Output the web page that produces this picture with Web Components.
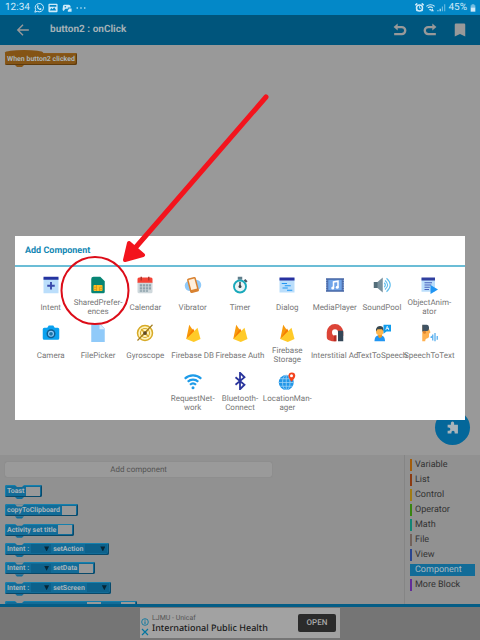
<!DOCTYPE html>
<html lang="en">
<head>
<meta charset="utf-8">
<meta name="viewport" content="width=device-width, initial-scale=1">
<title>button2 : onClick</title>
<style>
html, body { margin: 0; height: 100%; }
body { font-family: Roboto, "Noto Sans", sans-serif; text-rendering: geometricPrecision; overflow: hidden; }
</style>
</head>
<body>
<editor-app></editor-app>

<script>
/* Icon bodies, all on a 24x24 grid. */
const ICONS = {
  back: '<path d="M22 12H4M12 3l-9 9 9 9" fill="none" stroke="currentColor" stroke-width="2.4"/>',
  undo: '<path d="M2 19h13a6 6 0 0 0 0-12H6" fill="none" stroke="currentColor" stroke-width="4"/><path d="M1 7l7-6v12z" fill="currentColor"/>',
  redo: '<path d="M22 19H9A6 6 0 0 1 9 7h9" fill="none" stroke="currentColor" stroke-width="4"/><path d="M23 7l-7-6v12z" fill="currentColor"/>',
  bookmark: '<path d="M5 1h14a2 2 0 0 1 2 2v20l-9-4-9 4V3a2 2 0 0 1 2-2z" fill="currentColor"/>',
  whatsapp: '<path d="M2 22l2-6a10 10 0 1 1 4 4z" fill="none" stroke="currentColor" stroke-width="2.4"/><path d="M8 6c-3 4 3 12 9 11l1-3-3-2-2 2-3-4 1-2-1-3z" fill="currentColor"/>',
  picture: '<path fill-rule="evenodd" d="M3 2h18a2 2 0 0 1 2 2v16a2 2 0 0 1-2 2H3a2 2 0 0 1-2-2V4a2 2 0 0 1 2-2zM4 18h16l-5-8-4 5-3-3zM4 5v4h16V5z" fill="currentColor"/>',
  game: '<path d="M5 4h11c3 0 5 3 5 7h-7v3H8l-4 5c-3 0-3-4-2-8 0-4 1-7 3-7z" fill="currentColor"/><path d="M16 13h7v8h-9v-5h2z" fill="currentColor"/><circle cx="8" cy="9" r="2" fill="#0388c8"/>',
  dots: '<g fill="currentColor"><circle cx="3" cy="12" r="2"/><circle cx="12" cy="12" r="2"/><circle cx="21" cy="12" r="2"/></g>',
  alarm: '<path d="M1 6l5-5M23 6l-5-5M4 21l3-3M20 21l-3-3" stroke="currentColor" stroke-width="4"/><circle cx="12" cy="13" r="8" fill="none" stroke="currentColor" stroke-width="4"/><path d="M12 8v6h4" fill="none" stroke="currentColor" stroke-width="2"/>',
  wifi: '<g fill="none" stroke="currentColor" stroke-width="3"><path d="M1 9a16 16 0 0 1 22 0M5 13a10 10 0 0 1 13 0"/></g><path d="M8 16h7l-4 5zM17 14l4 8h-8z" fill="currentColor"/>',
  signal: '<path d="M1 19h3v3H1zM7 15h3v7H7z" fill="currentColor"/><path d="M13 9h3v13h-3zM19 3h3v19h-3z" fill="currentColor" opacity=".5"/>',
  battery: '<path d="M8 1h8v3h3v8H5V4h3z" fill="currentColor" opacity=".55"/><path d="M5 11h14v12H5z" fill="currentColor"/>',
  puzzle: '<path d="M3 7h6V4a3 3 0 0 1 6 0v3h7v16h-6v-2a3 3 0 0 0-6 0v2H3v-5h2a3 3 0 0 0 0-6H3z" fill="currentColor"/>',
  info: '<circle cx="12" cy="12" r="10" fill="none" stroke="currentColor" stroke-width="2.5"/><path d="M12 10v8M12 5v3" stroke="currentColor" stroke-width="3"/>',
  close: '<path d="M3 3l18 18M21 3L3 21" stroke="currentColor" stroke-width="3.5"/>',

  intent: '<path d="M2 3h20v20H2z" fill="#bbdefb"/><path d="M2 1h20v4H2z" fill="#2433a0"/><path d="M12 8v10M7 13h10" stroke="#3949ab" stroke-width="2.5"/>',
  prefs: '<path d="M6 1h9l6 6v14a2 2 0 0 1-2 2H5a2 2 0 0 1-2-2V4a3 3 0 0 1 3-3z" fill="#078574"/><rect x="6" y="12" width="12" height="8" rx="1" fill="#ffbe22"/><path d="M6 15h4M6 18h4M14 15h4M14 18h4M10 12v8M14 15v5" stroke="#d6931d"/>',
  calendar: '<path d="M2 8h20v13a2 2 0 0 1-2 2H4a2 2 0 0 1-2-2z" fill="#cfd8dc"/><path d="M4 2h16a2 2 0 0 1 2 2v5H2V4a2 2 0 0 1 2-2z" fill="#f44336"/><path d="M7 1v5M17 1v5" stroke="#b4342b" stroke-width="2"/><g fill="#8fa2ac"><path d="M5 11h3v3H5zM9 11h3v3H9zM13 11h3v3h-3zM17 11h3v3h-3zM5 15h3v3H5zM9 15h3v3H9zM13 15h3v3h-3zM17 15h3v3h-3zM5 19h3v2H5zM9 19h3v2H9zM13 19h3v2h-3z"/></g>',
  vibrator: '<circle cx="8" cy="13" r="7" fill="#90caf9"/><circle cx="16" cy="12" r="7" fill="#90caf9"/><g transform="rotate(-15 12 12)"><rect x="6" y="2" width="12" height="20" rx="2" fill="#d98231"/><rect x="8" y="4" width="8" height="14" fill="#fff0dc"/></g>',
  timer: '<path d="M9 1h6v4H9z" fill="#607d8b"/><path d="M18 5l3 3" stroke="#455a64" stroke-width="3"/><circle cx="12" cy="14" r="8" fill="#edf4f5" stroke="#19a9bb" stroke-width="2.5"/><path d="M12 8v7" stroke="#37474f" stroke-width="2"/><circle cx="12" cy="14" r="2" fill="#37474f"/>',
  dialog: '<path d="M2 3h20v19H2z" fill="#bbdefb"/><path d="M2 2h20v4H2z" fill="#2731a0"/><path d="M5 10h7M9 13h8M6 16h7M12 19h7" stroke="#2196f3" stroke-width="1.6"/>',
  media: '<path d="M0 3h24v18H0z" fill="#4565a4"/><path d="M3 5h18v14H3z" fill="#70a4e8"/><path d="M1 5v15M23 5v15" stroke="#b7d0f4" stroke-dasharray="2 1"/><path d="M10 16V8l6-1v8" fill="none" stroke="#fff" stroke-width="2"/><circle cx="9" cy="16" r="2" fill="#fff"/><circle cx="15" cy="15" r="2" fill="#fff"/>',
  sound: '<path d="M1 8h6v8H1z" fill="#546e7a"/><path d="M6 8l7-6v20l-7-6z" fill="#78909c"/><g fill="none" stroke="#62bfee" stroke-width="1.5"><path d="M15 9q3 3 0 6M16 6q7 6 0 12M18 3q10 9 0 18"/></g>',
  animator: '<path d="M2 3h18v18H2z" fill="#bbdefb"/><path d="M2 2h18v4H2z" fill="#303f9f"/><path d="M6 9h10M6 12h9M6 15h7M6 18h6" stroke="#4961bd" stroke-width="1.6"/><path d="M14 12l10 6-10 6z" fill="#2196f3"/>',
  camera: '<path d="M7 5l2-3h6l2 3h4a2 2 0 0 1 2 2v12a2 2 0 0 1-2 2H3a2 2 0 0 1-2-2V7a2 2 0 0 1 2-2z" fill="#0aa1ef"/><circle cx="12" cy="13" r="6" fill="#0d5f94"/><circle cx="12" cy="13" r="4" fill="#90caf9"/><circle cx="12" cy="13" r="2.5" fill="#1876aa"/>',
  file: '<path d="M3 0h12l6 6v18H3z" fill="#90caf9"/><path d="M14 0v7h7z" fill="#d9efff"/>',
  gyro: '<circle cx="12" cy="12" r="10" fill="#fff4bf" stroke="#d7aa27" stroke-width="2"/><circle cx="12" cy="12" r="6" fill="none" stroke="#d7aa27" stroke-width="1.5"/><path d="M7 7l10 10M17 7L7 17" stroke="#d7aa27" stroke-width="2"/><path d="M2 22L22 1" stroke="#a37c1d" stroke-width="1.5"/><circle cx="12" cy="12" r="2.5" fill="#5d4927"/>',
  firebase: '<path d="M3 20L7 1l6 9z" fill="#f89a0b"/><path d="M3 20L12 6l4 7z" fill="#f57c00"/><path d="M3 20L18 5l4 15-9 4z" fill="#ffca28"/>',
  admob: '<path d="M5 22a5 5 0 0 1-4-5v-6a11 11 0 0 1 22 0v5h-7v-5a4 4 0 0 0-8 0 5 5 0 0 0 5 5v7H8z" fill="#dc4437"/><path d="M16 9h7v14h-7z" fill="#334657"/><path d="M11 15h3v8h-4z" fill="#b72d25"/>',
  tts: '<path d="M2 23c0-6 3-8 7-8s7 2 7 8z" fill="#2196f3"/><path d="M7 13h5v4l-3 2-2-2z" fill="#ee9823"/><circle cx="9" cy="10" r="5" fill="#ffb64c"/><path d="M4 10V7c1-6 10-6 10 0v3l-2-3H6z" fill="#37474f"/><path d="M14 1h10v9h-6l-4 3z" fill="#109cec"/><path d="M17 8l2-5 2 5M18 6h3" fill="none" stroke="#fff"/>',
  stt: '<path d="M3 2h7l4 9-2 2v4c-1 3-5 1-5 6H3z" fill="#ffb150"/><path d="M3 10V1h6c3 0 4 5 2 8z" fill="#405363"/><circle cx="6" cy="11" r="2" fill="#df842d"/><path d="M14 18l3-2M17 14v8M20 12v11M23 16v5" stroke="#5fb2ef" stroke-width="1.8"/>',
  request: '<g fill="none" stroke="#1e9be8" stroke-width="3"><path d="M1 9a16 16 0 0 1 22 0M5 13a10 10 0 0 1 14 0M8 17a6 6 0 0 1 8 0"/></g><circle cx="12" cy="21" r="2" fill="#1e9be8"/>',
  bluetooth: '<path d="M6 7l12 10-6 6V1l6 6L6 17" fill="none" stroke="#2a359c" stroke-width="2.4"/>',
  location: '<circle cx="11" cy="14" r="10" fill="#2196e8"/><g fill="none" stroke="#a0d4f7"><path d="M1 14h20M3 9h16M3 19h16M11 4v20"/><ellipse cx="11" cy="14" rx="5" ry="10"/></g><path d="M18 13c-3-4-4-6-4-8a4 4 0 0 1 9 0c0 2-2 5-5 8z" fill="#f4421c"/><circle cx="18" cy="5" r="2" fill="#fff"/>'
};

class AppIcon extends HTMLElement {
  constructor() {
    super();
    this.attachShadow({ mode: 'open' });
  }

  connectedCallback() {
    this.shadowRoot.innerHTML = `
      <style>
        :host { display: block; flex-shrink: 0; width: var(--icon-size, 18px); height: var(--icon-size, 18px); }
        svg { display: block; width: 100%; height: 100%; }
      </style>
      <svg viewBox="0 0 24 24" aria-hidden="true">${ICONS[this.getAttribute('name')] || ''}</svg>`;
  }
}
customElements.define('app-icon', AppIcon);

class StatusBar extends HTMLElement {
  constructor() {
    super();
    this.attachShadow({ mode: 'open' }).innerHTML = `
      <style>
        :host {
          display: flex; justify-content: space-between; align-items: center;
          height: 15px; padding: 0 3px 0 5px;
          background: #0388c8; color: #cfeaf8; font-size: 10px; line-height: 15px;
          --icon-size: 10px;
        }
        div { display: flex; align-items: center; gap: 4px; }
        .right { gap: 2px; --icon-size: 9px; }
        .battery { --icon-size: 8px; }
      </style>
      <div>
        <span>12:34</span>
        <app-icon name="whatsapp"></app-icon>
        <app-icon name="picture"></app-icon>
        <app-icon name="game"></app-icon>
        <app-icon name="dots"></app-icon>
      </div>
      <div class="right">
        <app-icon name="alarm"></app-icon>
        <app-icon name="wifi"></app-icon>
        <app-icon name="signal"></app-icon>
        <span>45%</span>
        <app-icon class="battery" name="battery"></app-icon>
      </div>`;
  }
}
customElements.define('status-bar', StatusBar);

class ToolBar extends HTMLElement {
  constructor() {
    super();
    this.attachShadow({ mode: 'open' }).innerHTML = `
      <style>
        :host {
          display: flex; align-items: center;
          height: 30px; padding: 0 13px 0 16px;
          background: #00557c; color: #999;
        }
        h1 { flex: 1; margin: 0 0 0 20px; font-size: 10px; line-height: 14px; font-weight: 700; color: #a4b1b7; }
        button { display: flex; padding: 0; border: 0; background: none; color: inherit; --icon-size: 14px; }
        .actions { display: flex; gap: 16px; }
      </style>
      <button type="button" aria-label="Back"><app-icon name="back"></app-icon></button>
      <h1><slot></slot></h1>
      <div class="actions">
        <button type="button" aria-label="Undo"><app-icon name="undo"></app-icon></button>
        <button type="button" aria-label="Redo"><app-icon name="redo"></app-icon></button>
        <button type="button" aria-label="Save"><app-icon name="bookmark"></app-icon></button>
      </div>`;
  }
}
customElements.define('tool-bar', ToolBar);

/* One code block. "hat" makes it an event header; otherwise it has a notch on top. */
class CodeBlock extends HTMLElement {
  constructor() {
    super();
    this.attachShadow({ mode: 'open' }).innerHTML = `
      <style>
        :host {
          position: relative; box-sizing: border-box;
          display: flex; align-items: center; gap: 2px;
          width: max-content; height: 12px; padding: 0 2px; flex-shrink: 0;
          border-radius: 2px;
          background: var(--block, #126c98); color: #a9b4ba;
          box-shadow: inset -1px -1px 0 var(--edge, #08496a), inset 1px 1px 0 var(--light, #1580ad);
          font-size: 7px; line-height: 10px; font-weight: 700; white-space: nowrap;
        }
        :host([hat]) { --block: #845415; --edge: #5e3b0d; --light: #8b5918; }
        .top, .tab { position: absolute; left: 10px; width: 9px; height: 3px; }
        .top { top: 0; background: #919191; clip-path: polygon(0 0, 100% 0, 78% 70%, 22% 70%); }
        .tab { top: 100%; background: var(--block, #126c98); clip-path: polygon(0 0, 100% 0, 78% 70%, 22% 70%); }
        :host([hat]) .top {
          left: 0; top: -3px; width: 38px; height: 5px;
          clip-path: none; border-radius: 50% 50% 0 0; background: var(--block);
        }
      </style>
      <i class="top"></i><slot></slot><i class="tab"></i>`;
  }
}
customElements.define('code-block', CodeBlock);

/* Empty value socket of a block: a text box, or a drop-down with kind="select". */
class BlockField extends HTMLElement {
  constructor() {
    super();
    this.attachShadow({ mode: 'open' });
  }

  connectedCallback() {
    const label = this.getAttribute('label');
    const select = this.getAttribute('kind') === 'select';
    this.shadowRoot.innerHTML = `
      <style>
        :host { display: grid; align-items: center; width: var(--w, 14px); height: 10px; }
        input, select {
          grid-area: 1 / 1; box-sizing: border-box; width: 100%; height: 9px;
          margin: 0; padding: 0; border: 0; border-radius: 0; appearance: none; font-size: 7px;
        }
        input { background: #999; }
        select { background: #0d618b; }
        i {
          grid-area: 1 / 1; justify-self: end; width: 5px; height: 5px; margin-right: 2px;
          background: #062738; clip-path: polygon(0 0, 100% 0, 50% 100%); pointer-events: none;
        }
      </style>
      ${select ? `<select aria-label="${label}"><option></option></select><i></i>` : `<input type="text" aria-label="${label}">`}`;
  }
}
customElements.define('block-field', BlockField);

class BlockPalette extends HTMLElement {
  constructor() {
    super();
    this.attachShadow({ mode: 'open' }).innerHTML = `
      <style>
        :host {
          display: flex; background: #919191; overflow: hidden;
          border-bottom: 3px solid #045d86;
        }
        .blocks { flex: 1; display: flex; flex-direction: column; padding: 7px 6px 0 5px; }
        .add {
          width: 68%; height: 15px; padding: 0; border: 0; border-radius: 2px;
          background: #9a9a9a; color: #555; font: inherit; font-size: 8px; line-height: 15px;
          flex-shrink: 0; box-shadow: 0 0 1px #777; text-rendering: inherit;
        }
        .list {
          flex: 1; display: flex; flex-direction: column; justify-content: space-between;
          margin: 8px 0 -9px;
        }
        .intent { --w: 20px; }
        .short { --w: 22px; }
        .pair { gap: 20px; padding-left: 82px; }
        nav {
          box-sizing: border-box; width: 76px; padding: 4px 5px 13px;
          display: flex; flex-direction: column; gap: 3px; border-left: 1px solid #858585;
        }
        a {
          height: 12px; padding-left: 3px; border-left: 2px solid var(--c);
          color: #333; font-size: 9px; line-height: 12px; text-decoration: none;
        }
        a[aria-current] { background: var(--c); color: #a9b8c0; }
      </style>
      <div class="blocks">
        <button class="add" type="button">Add component</button>
        <div class="list">
          <code-block>Toast <block-field label="Toast text"></block-field></code-block>
          <code-block>copyToClipboard <block-field label="Clipboard text"></block-field></code-block>
          <code-block>Activity set title <block-field label="Title"></block-field></code-block>
          <code-block>Intent : <block-field class="intent" kind="select" label="Intent"></block-field> setAction <block-field class="short" kind="select" label="Action"></block-field></code-block>
          <code-block>Intent : <block-field class="intent" kind="select" label="Intent"></block-field> setData <block-field label="Data"></block-field></code-block>
          <code-block>Intent : <block-field class="intent" kind="select" label="Intent"></block-field> setScreen <block-field class="short" kind="select" label="Screen"></block-field></code-block>
          <code-block class="pair"><block-field label="Key"></block-field><block-field label="Value"></block-field></code-block>
        </div>
      </div>
      <nav aria-label="Block categories">
        <a href="#" style="--c: #a35c09">Variable</a>
        <a href="#" style="--c: #8b3b12">List</a>
        <a href="#" style="--c: #a17b12">Control</a>
        <a href="#" style="--c: #388410">Operator</a>
        <a href="#" style="--c: #128575">Math</a>
        <a href="#" style="--c: #72625b">File</a>
        <a href="#" style="--c: #2a458f">View</a>
        <a href="#" style="--c: #126c98" aria-current="true">Component</a>
        <a href="#" style="--c: #622d98">More Block</a>
      </nav>`;
  }
}
customElements.define('block-palette', BlockPalette);

class AdBanner extends HTMLElement {
  constructor() {
    super();
    this.attachShadow({ mode: 'open' }).innerHTML = `
      <style>
        :host { display: flex; justify-content: center; padding: 1px 0 2px; background: #757575; }
        .ad {
          box-sizing: border-box; display: flex; align-items: center; gap: 3px;
          width: 200px; height: 30px; padding: 0 4px 0 1px; background: #a2a2a2;
        }
        .marks {
          display: flex; flex-direction: column; align-items: center; gap: 2px; align-self: flex-end;
          padding-bottom: 2px; --icon-size: 8px;
        }
        .marks button { display: flex; padding: 0; border: 0; background: none; color: #04759f; }
        .text { flex: 1; white-space: nowrap; }
        p { margin: 0; font-size: 7px; line-height: 9px; color: #555; }
        h2 { margin: 0; font-family: "Noto Sans", sans-serif; font-size: 9px; line-height: 10px; font-weight: 500; color: #191919; }
        .open {
          width: 38px; height: 18px; padding: 0; border: 0; border-radius: 2px;
          background: #2b2b2b; color: #aaa; font: 500 8px/18px Roboto, sans-serif; text-rendering: inherit;
        }
      </style>
      <div class="ad">
        <div class="marks">
          <button type="button" aria-label="Ad info"><app-icon name="info"></app-icon></button>
          <button type="button" aria-label="Close ad"><app-icon name="close"></app-icon></button>
        </div>
        <div class="text"><p>LJMU - Unicaf</p><h2>International Public Health</h2></div>
        <button class="open" type="button">OPEN</button>
      </div>`;
  }
}
customElements.define('ad-banner', AdBanner);

class ComponentItem extends HTMLElement {
  constructor() {
    super();
    this.attachShadow({ mode: 'open' });
  }

  connectedCallback() {
    this.shadowRoot.innerHTML = `
      <style>
        :host { display: block; width: calc(100% / 9); height: 48px; }
        button {
          display: flex; flex-direction: column; align-items: center; gap: 3px;
          width: 100%; height: 100%; padding: 3px 0; border: 0; background: none; font: inherit;
          text-rendering: inherit;
        }
        .label { flex: 1; display: flex; align-items: center; }
        .label span {
          text-align: center; white-space: nowrap;
          font-size: 8px; line-height: 9px; color: #777;
        }
      </style>
      <button type="button">
        <app-icon name="${this.getAttribute('icon')}"></app-icon>
        <span class="label"><span><slot></slot></span></span>
      </button>`;
  }
}
customElements.define('component-item', ComponentItem);

class ComponentDialog extends HTMLElement {
  constructor() {
    super();
    this.attachShadow({ mode: 'open' }).innerHTML = `
      <style>
        :host { display: block; background: #fff; }
        h2 {
          margin: 0; padding: 9px 10px 8px; font-size: 9px; line-height: 12px; font-weight: 700;
          color: #1488b4; border-bottom: 2px solid #6bbdd6;
        }
        .items { display: flex; flex-wrap: wrap; justify-content: center; padding: 6px 12px 3px; }
      </style>
      <section role="dialog" aria-label="Add Component">
        <h2>Add Component</h2>
        <div class="items"><slot></slot></div>
      </section>`;
  }
}
customElements.define('component-dialog', ComponentDialog);

/* Hand-drawn pointer: a ring round one item and an arrow towards it. */
class CalloutMark extends HTMLElement {
  constructor() {
    super();
    this.attachShadow({ mode: 'open' }).innerHTML = `
      <style>
        :host { display: block; position: absolute; top: 0; left: 0; pointer-events: none; }
        svg { display: block; }
      </style>
      <svg width="300" height="340" viewBox="0 0 300 340" aria-hidden="true">
        <circle cx="95" cy="290.5" r="33.5" fill="none" stroke="#dc0c18" stroke-width="2"/>
        <path d="M266 97L136 247" stroke="#f3141d" stroke-width="5" stroke-linecap="round"/>
        <path d="M125 260l4-17 14 12z" fill="#f3141d" stroke="#f3141d" stroke-width="4" stroke-linejoin="round"/>
      </svg>`;
  }
}
customElements.define('callout-mark', CalloutMark);

class EditorApp extends HTMLElement {
  constructor() {
    super();
    this.attachShadow({ mode: 'open' }).innerHTML = `
      <style>
        :host { display: flex; flex-direction: column; position: relative; height: 100%; min-height: 480px; }
        .canvas { flex: 1; position: relative; padding: 8px 5px; background: #999; }
        .fab {
          position: absolute; right: 10px; bottom: 10px;
          display: flex; align-items: center; justify-content: center;
          width: 35px; height: 35px; padding: 0; border: 0; border-radius: 50%;
          background: #04679a; color: #a9b4ba; --icon-size: 13px;
        }
        .overlay {
          position: absolute; inset: 15px 0 0; display: flex; align-items: center; padding: 0 15px;
        }
        component-dialog { flex: 1; }
      </style>
      <status-bar></status-bar>
      <tool-bar>button2 : onClick</tool-bar>
      <main class="canvas">
        <code-block hat>When button2 clicked</code-block>
        <button class="fab" type="button" aria-label="Components"><app-icon name="puzzle"></app-icon></button>
      </main>
      <block-palette></block-palette>
      <ad-banner></ad-banner>
      <div class="overlay">
        <component-dialog>
          <component-item icon="intent">Intent</component-item>
          <component-item icon="prefs">SharedPrefer-<br>ences</component-item>
          <component-item icon="calendar">Calendar</component-item>
          <component-item icon="vibrator">Vibrator</component-item>
          <component-item icon="timer">Timer</component-item>
          <component-item icon="dialog">Dialog</component-item>
          <component-item icon="media">MediaPlayer</component-item>
          <component-item icon="sound">SoundPool</component-item>
          <component-item icon="animator">ObjectAnim-<br>ator</component-item>
          <component-item icon="camera">Camera</component-item>
          <component-item icon="file">FilePicker</component-item>
          <component-item icon="gyro">Gyroscope</component-item>
          <component-item icon="firebase">Firebase DB</component-item>
          <component-item icon="firebase">Firebase Auth</component-item>
          <component-item icon="firebase">Firebase<br>Storage</component-item>
          <component-item icon="admob">Interstitial Ad</component-item>
          <component-item icon="tts">TextToSpeech</component-item>
          <component-item icon="stt">SpeechToText</component-item>
          <component-item icon="request">RequestNet-<br>work</component-item>
          <component-item icon="bluetooth">Bluetooth-<br>Connect</component-item>
          <component-item icon="location">LocationMan-<br>ager</component-item>
        </component-dialog>
      </div>
      <callout-mark></callout-mark>`;
  }
}
customElements.define('editor-app', EditorApp);
</script>
</body>
</html>
